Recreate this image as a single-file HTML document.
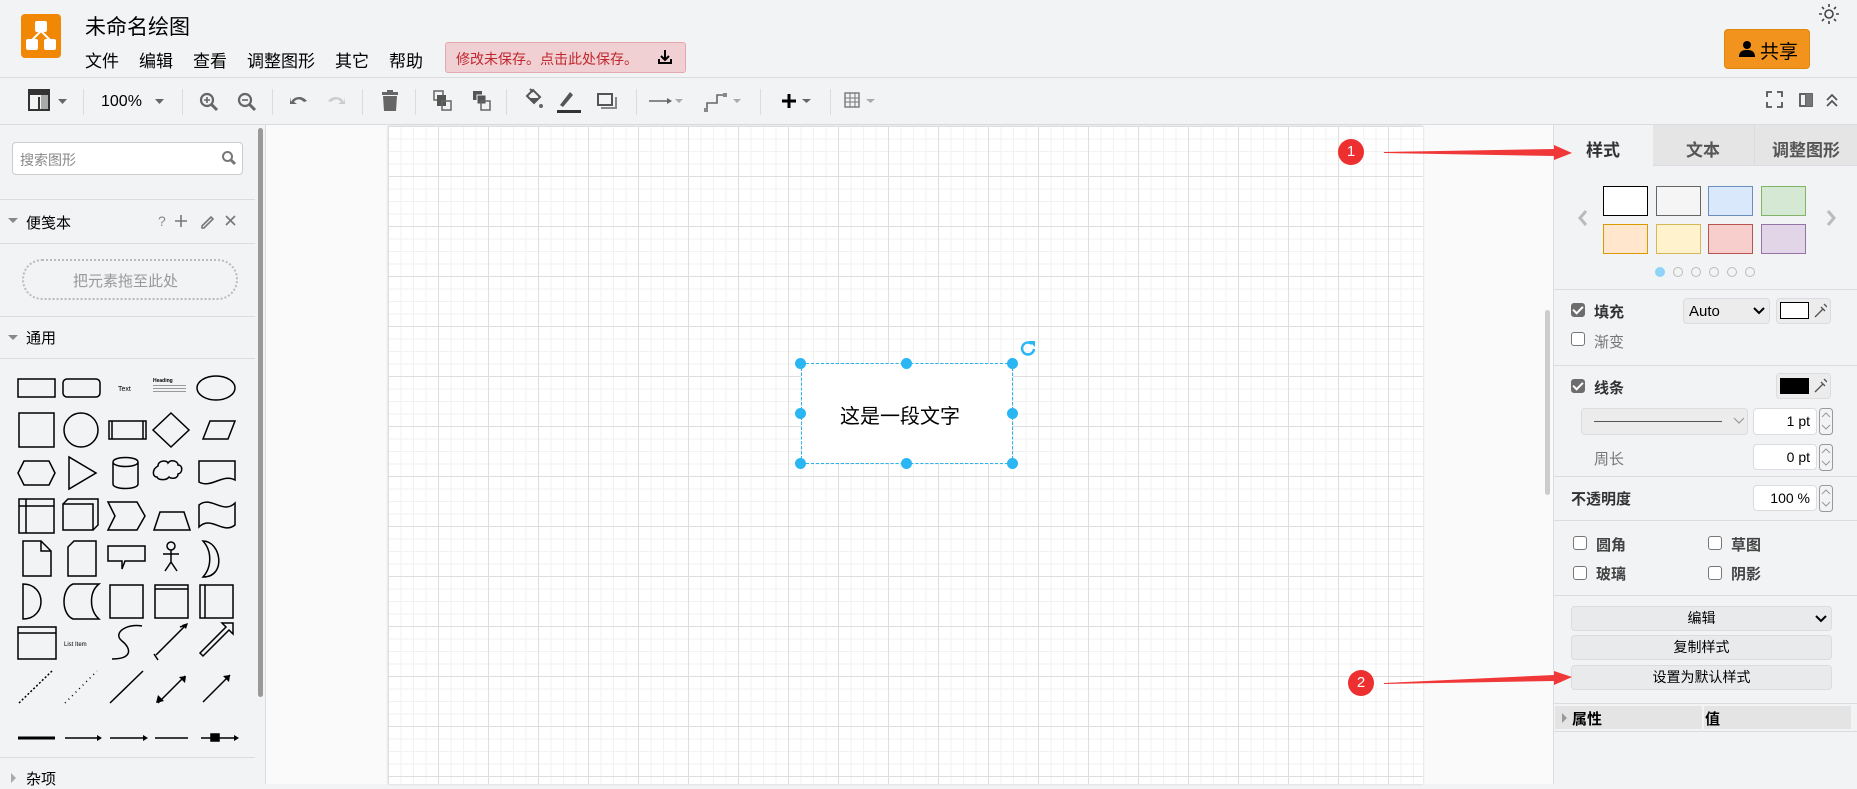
<!DOCTYPE html>
<html><head><meta charset="utf-8"><style>
*{box-sizing:border-box;margin:0;padding:0}
body{width:1857px;height:784px;overflow:hidden;background:#f1f3f4;font-family:"Liberation Sans","Noto Sans CJK SC",sans-serif;position:relative;color:#000}
.a{position:absolute}
.sep{position:absolute;height:1px;background:#dadce0}
.vs{position:absolute;width:1px;background:#dadce0;top:89px;height:26px}
.t{position:absolute;white-space:nowrap}
.cb{position:absolute;width:14px;height:14px;border:1.5px solid #777;border-radius:3px;background:#fff}
.cbk{background:#6d6d6d;border-color:#6d6d6d}
.cbk:after{content:"";position:absolute;left:3px;top:0px;width:4px;height:8px;border:solid #fff;border-width:0 2px 2px 0;transform:rotate(45deg)}
.btn{position:absolute;border:1px solid #dadce0;border-radius:4px;background:#e9eaeb;font-size:14px;text-align:center;line-height:23px}
.inp{position:absolute;background:#fff;border:1px solid #dadce0;border-radius:4px;font-size:14px;text-align:right;padding-right:6px;line-height:24px}
.sw{position:absolute;width:45px;height:30px;border:1px solid}
.dot{position:absolute;width:10px;height:10px;border-radius:50%;border:1px solid #bbb;top:267px}
.h{position:absolute;width:11px;height:11px;border-radius:50%;background:#29b6f2}
</style></head><body>

<!-- header -->
<div class="a" style="left:21px;top:14px;width:40px;height:44px;background:#f08705;border-radius:4px"></div>
<svg class="a" style="left:21px;top:14px" width="40" height="44" viewBox="0 0 40 44"><g fill="#fff" stroke="#fff" stroke-width="2"><rect x="15" y="8" width="10" height="9" rx="1"/><rect x="6" y="26" width="10" height="9" rx="1"/><rect x="24" y="26" width="10" height="9" rx="1"/><path d="M20 17L11 26M20 17L29 26" fill="none"/></g></svg>
<div class="t" style="left:85px;top:11px;font-size:21px">未命名绘图</div>
<div class="t" style="left:85px;top:47px;font-size:17px">文件</div>
<div class="t" style="left:139px;top:47px;font-size:17px">编辑</div>
<div class="t" style="left:193px;top:47px;font-size:17px">查看</div>
<div class="t" style="left:247px;top:47px;font-size:17px">调整图形</div>
<div class="t" style="left:335px;top:47px;font-size:17px">其它</div>
<div class="t" style="left:389px;top:47px;font-size:17px">帮助</div>
<div class="a" style="left:445px;top:42px;width:241px;height:31px;background:#f1d0d3;border:1px solid #e4a7ad;border-radius:3px"></div>
<div class="t" style="left:456px;top:49px;font-size:14px;color:#c0262d">修改未保存。点击此处保存。</div>
<svg class="a" style="left:656px;top:48px" width="18" height="18" viewBox="0 0 18 18"><path d="M9 2v10M5 8l4 4 4-4M3 11v4h12v-4" stroke="#000" stroke-width="2" fill="none"/></svg>
<svg class="a" style="left:1818px;top:3px" width="22" height="22" viewBox="0 0 22 22"><circle cx="11" cy="11" r="4" fill="none" stroke="#444" stroke-width="1.6"/><g stroke="#444" stroke-width="1.6"><path d="M11 1v3M11 18v3M1 11h3M18 11h3M4 4l2 2M16 16l2 2M4 18l2-2M16 6l2-2"/></g></svg>
<div class="a" style="left:1724px;top:29px;width:86px;height:40px;background:#f2931e;border:1px solid #e0850f;border-radius:4px"></div>
<svg class="a" style="left:1738px;top:40px" width="18" height="18" viewBox="0 0 18 18"><circle cx="9" cy="5" r="4"/><path d="M1 17c0-6 4-7 8-7s8 1 8 7z"/></svg>
<div class="t" style="left:1760px;top:37px;font-size:19px">共享</div>
<div class="sep" style="left:0;top:77px;width:1857px"></div>

<!-- toolbar -->
<svg class="a" style="left:0;top:78px" width="900" height="46" viewBox="0 78 900 46">
<g fill="#666" stroke="none">
<rect x="29" y="90" width="20" height="20" fill="none" stroke="#333" stroke-width="2"/><rect x="29" y="90" width="20" height="5" fill="#333"/><rect x="41" y="95" width="7" height="14" fill="#aaa"/><path d="M38 97h2v13h-2z" fill="#333"/>
<path d="M58 99h9l-4.5 5z"/><path d="M155 99h9l-4.5 5z"/>
<circle cx="207" cy="100" r="6" fill="none" stroke="#666" stroke-width="2.2"/><path d="M211 104l6 6" stroke="#666" stroke-width="3"/><path d="M204 100h6M207 97v6" stroke="#666" stroke-width="1.6"/>
<circle cx="245" cy="100" r="6" fill="none" stroke="#666" stroke-width="2.2"/><path d="M249 104l6 6" stroke="#666" stroke-width="3"/><path d="M242 100h6" stroke="#666" stroke-width="1.6"/>
<path d="M291 102c3-6 11-7 16-1l-3 1c-4-4-8-3-10 0l3 2h-7v-7z"/>
<path d="M344 102c-3-6-11-7-16-1l3 1c4-4 8-3 10 0l-3 2h7v-7z" fill="#ccc"/>
<rect x="382" y="92" width="16" height="3"/><rect x="387" y="90" width="6" height="3"/><path d="M383 96h14l-1 15h-12z"/>
<rect x="434" y="91" width="9" height="9" fill="none" stroke="#666" stroke-width="1.5"/><rect x="437" y="95" width="9" height="11" fill="#555"/><rect x="442" y="101" width="9" height="9" fill="none" stroke="#666" stroke-width="1.5"/>
<rect x="473" y="91" width="9" height="9" fill="#555"/><rect x="477" y="95" width="9" height="9" fill="#555" stroke="#f1f3f4" stroke-width="1"/><rect x="481" y="101" width="9" height="9" fill="none" stroke="#666" stroke-width="1.5"/>
<path d="M527 96l6-6 7 7-6 6z" fill="none" stroke="#555" stroke-width="2"/><path d="M529 98h11l-6 6z" fill="#555"/><circle cx="541" cy="106" r="2"/><path d="M530 89l3 3" stroke="#555" stroke-width="2"/>
<path d="M560 105l10-13 3 3-10 12z" fill="#555"/><rect x="557" y="110" width="24" height="3" fill="#333"/>
<rect x="598" y="94" width="14" height="11" fill="none" stroke="#555" stroke-width="2"/><path d="M601 107h14v-10h2v12h-16z" fill="#888"/>
<path d="M649 101h19" stroke="#666" stroke-width="1.6"/><path d="M667 98l5 3-5 3z"/><path d="M675 99h8l-4 4z" fill="#aaa"/>
<path d="M707 110v-7h10v-8h8" stroke="#666" stroke-width="1.6" fill="none"/><rect x="704" y="108" width="4" height="4" fill="#888"/><rect x="723" y="93" width="4" height="4" fill="#888"/><path d="M733 99h8l-4 4z" fill="#aaa"/>
<path d="M782 101h14M789 94v14" stroke="#000" stroke-width="3"/><path d="M802 99h9l-4.5 4z" fill="#666"/>
<rect x="845" y="93" width="14" height="14" fill="none" stroke="#777" stroke-width="1.4"/><path d="M850 93v14M855 93v14M845 98h14M845 102h14" stroke="#777" stroke-width="1"/><path d="M866 99h9l-4.5 4z" fill="#aaa"/>
</g></svg>
<div class="t" style="left:101px;top:93px;font-size:16px">100%</div>
<div class="vs" style="left:83px"></div><div class="vs" style="left:182px"></div><div class="vs" style="left:272px"></div><div class="vs" style="left:362px"></div><div class="vs" style="left:415px"></div><div class="vs" style="left:506px"></div><div class="vs" style="left:636px"></div><div class="vs" style="left:760px"></div><div class="vs" style="left:830px"></div>
<svg class="a" style="left:1766px;top:91px" width="80" height="20" viewBox="0 0 80 20"><g stroke="#555" stroke-width="1.8" fill="none"><path d="M1 6V1h5M11 1h5v5M16 11v5h-5M6 16H1v-5"/><rect x="34" y="3" width="12" height="12"/><path d="M40 3v12" /><path d="M61 9l5-5 5 5M61 15l5-5 5 5"/></g><rect x="40" y="3" width="6" height="12" fill="#777"/></svg>
<div class="sep" style="left:0;top:124px;width:1857px"></div>

<!-- left sidebar -->
<div class="a" style="left:12px;top:142px;width:231px;height:33px;background:#fff;border:1px solid #ccc;border-radius:4px"></div>
<div class="t" style="left:20px;top:150px;font-size:14px;color:#888">搜索图形</div>
<svg class="a" style="left:221px;top:150px" width="16" height="16" viewBox="0 0 16 16"><circle cx="6.5" cy="6.5" r="4.5" fill="none" stroke="#777" stroke-width="2"/><path d="M10 10l4 4" stroke="#777" stroke-width="3"/></svg>
<div class="sep" style="left:0;top:199px;width:255px"></div>
<svg class="a" style="left:8px;top:217px" width="10" height="8"><path d="M0 1h10L5 6z" fill="#888"/></svg>
<div class="t" style="left:26px;top:212px;font-size:15px">便笺本</div>
<div class="t" style="left:158px;top:213px;font-size:14px;color:#888">?</div>
<svg class="a" style="left:174px;top:213px" width="70" height="16"><g stroke="#777" stroke-width="1.6" fill="none"><path d="M7 2v12M1 8h12"/><path d="M28 13l9-9 2 2-9 9h-2z"/><path d="M52 3l9 9M61 3l-9 9"/></g></svg>
<div class="sep" style="left:0;top:243px;width:255px"></div>
<div class="a" style="left:22px;top:259px;width:216px;height:41px;border:2px dotted #bbb;border-radius:20px"></div>
<div class="t" style="left:73px;top:270px;font-size:15px;color:#999">把元素拖至此处</div>
<div class="sep" style="left:0;top:316px;width:255px"></div>
<svg class="a" style="left:8px;top:334px" width="10" height="8"><path d="M0 1h10L5 6z" fill="#888"/></svg>
<div class="t" style="left:26px;top:327px;font-size:15px">通用</div>
<div class="sep" style="left:0;top:358px;width:255px"></div>
<svg class="a" style="left:0;top:360px" width="255" height="395" viewBox="0 360 255 395"><g fill="none" stroke="#000" stroke-width="1.5">
<rect x="18" y="379" width="37" height="18"/><rect x="63" y="379" width="37" height="18" rx="4"/><ellipse cx="216" cy="388" rx="19" ry="12"/>
<rect x="19" y="413" width="35" height="34"/><circle cx="81" cy="430" r="17"/><rect x="109" y="421" width="37" height="18"/><path d="M112 421v18M143 421v18"/><path d="M171 413l18 17-18 17-18-17z"/><path d="M203 439l7-18h25l-7 18z"/>
<path d="M18 473l6-12h25l6 12-6 12H24z"/><path d="M69 457v32l27-16z"/><path d="M113 462c0-6 25-6 25 0v22c0 6-25 6-25 0zM113 462c0 6 25 6 25 0"/><path d="M158 466c0-6 9-6 10-3 3-4 10-2 10 2 5 0 5 8 0 9 0 5-7 5-9 3-3 4-11 3-12 0-5 0-5-8 1-11z"/><path d="M199 461h36v19c-12-7-24 9-36 2z"/>
<rect x="19" y="499" width="35" height="34"/><path d="M26 499v34M19 506h35"/><path d="M63 504h30v26H63zM63 504l5-5h30v26l-5 5"/><path d="M108 502h29l8 14-8 14h-29l7-14z"/><path d="M154 530l6-18h24l6 18z"/><path d="M199 505c12-10 24 10 36-2v22c-12 10-24-10-36 2z"/>
<path d="M23 541h18l10 10v25H23z"/><path d="M41 541v10h10"/><path d="M68 547l6-6h22v35H68z"/><path d="M108 546h37v15h-20l-3 8v-8h-14z"/><circle cx="171" cy="546" r="4"/><path d="M171 550v12M163 554h16M171 562l-6 9M171 562l6 9"/><path d="M203 541c18 0 24 36 0 36 9-10 9-26 0-36z"/>
<path d="M23 584c24 0 24 35 0 35z"/><path d="M73 584h26c-10 8-10 26 0 35H73c-12-5-12-30 0-35z"/><rect x="110" y="585" width="33" height="33"/><rect x="155" y="585" width="33" height="33"/><path d="M155 589h33"/><rect x="200" y="585" width="33" height="33"/><path d="M205 585v33"/>
<rect x="18" y="627" width="38" height="32"/><path d="M18 633h38"/><path d="M112 659c20 0 20-10 10-18s5-18 20-15"/><path d="M156 655l30-30M158 660l-4-6M186 625l-6 2"/><path d="M200 653l26-26-4-4h11v11l-4-4-26 26z"/>
<path d="M19 703l33-32" stroke-dasharray="2 2"/><path d="M65 703l32-32" stroke-dasharray="1 4"/><path d="M110 703l33-32"/><path d="M158 703l27-27"/><path d="M203 702l27-27"/>
<path d="M18 738h37" stroke-width="3"/><path d="M65 738h32M110 738h33M155 738h33M201 738h33"/><rect x="211" y="734" width="8" height="7" fill="#000"/>
</g><g fill="#000"><path d="M182 625l6-2-2 6zM156 703l2-8 6 6zM186 676l-1 7-6-6zM230 675l-1 7-6-6zM97 735l5 3-5 3zM143 735l5 3-5 3zM234 735l5 3-5 3z"/></g>
<text x="118" y="391" font-size="7" font-family="Liberation Sans">Text</text><text x="153" y="382" font-size="5" font-weight="bold" font-family="Liberation Sans">Heading</text><text x="64" y="646" font-size="6" font-family="Liberation Sans">List Item</text>
<g fill="#999"><rect x="153" y="385" width="33" height="1"/><rect x="153" y="388" width="33" height="1"/><rect x="153" y="391" width="33" height="1"/></g></svg>
<div class="sep" style="left:0;top:757px;width:255px"></div>
<svg class="a" style="left:10px;top:773px" width="8" height="10"><path d="M1 0v10l5-5z" fill="#aaa"/></svg>
<div class="t" style="left:26px;top:768px;font-size:15px">杂项</div>
<div class="a" style="left:258px;top:128px;width:5px;height:569px;background:#999;border-radius:3px"></div>

<!-- canvas -->
<div class="a" style="left:265px;top:125px;width:1288px;height:659px;background:#fafafa;border-left:1px solid #dadce0"></div>
<div class="a" style="left:388px;top:126px;width:1035px;height:658px;background-color:#fff;
background-image:linear-gradient(#dedede 1px,transparent 1px),linear-gradient(90deg,#dedede 1px,transparent 1px),linear-gradient(#f2f2f2 1px,transparent 1px),linear-gradient(90deg,#f2f2f2 1px,transparent 1px);
background-size:50px 50px,50px 50px,12.5px 12.5px,12.5px 12.5px;box-shadow:0 0 2px #ccc"></div>
<div class="a" style="left:1545px;top:310px;width:5px;height:185px;background:#ccc;border-radius:3px"></div>
<div class="a" style="left:801px;top:363px;width:212px;height:101px;background:#fff;border:1px dashed #000"></div>
<div class="a" style="left:801px;top:363px;width:212px;height:101px;border:1px dashed #29b6f2"></div>
<div class="t" style="left:840px;top:400px;font-size:20px">这是一段文字</div>
<div class="h" style="left:795px;top:358px"></div><div class="h" style="left:901px;top:358px"></div><div class="h" style="left:1007px;top:358px"></div>
<div class="h" style="left:795px;top:408px"></div><div class="h" style="left:1007px;top:408px"></div>
<div class="h" style="left:795px;top:458px"></div><div class="h" style="left:901px;top:458px"></div><div class="h" style="left:1007px;top:458px"></div>
<svg class="a" style="left:1020px;top:340px" width="16" height="16" viewBox="0 0 16 16"><path d="M12 4A6 6 0 1 0 14 9" fill="none" stroke="#29b6f2" stroke-width="2.5"/><path d="M9 1h6v6z" fill="#29b6f2"/></svg>

<!-- right panel -->
<div class="a" style="left:1553px;top:125px;width:304px;height:659px;background:#f1f3f4;border-left:1px solid #dadce0"></div>
<div class="a" style="left:1653px;top:125px;width:204px;height:41px;background:#e5e5e5;border-bottom:1px solid #dadce0"></div>
<div class="a" style="left:1754px;top:125px;width:1px;height:41px;background:#dadce0"></div>
<div class="t" style="left:1586px;top:136px;font-size:17px;font-weight:bold;color:#333">样式</div>
<div class="t" style="left:1686px;top:136px;font-size:17px;font-weight:bold;color:#555">文本</div>
<div class="t" style="left:1772px;top:136px;font-size:17px;font-weight:bold;color:#555">调整图形</div>
<div class="sw" style="left:1603px;top:186px;background:#fff;border-color:#000"></div>
<div class="sw" style="left:1656px;top:186px;background:#f5f5f5;border-color:#666"></div>
<div class="sw" style="left:1708px;top:186px;background:#dae8fc;border-color:#6c8ebf"></div>
<div class="sw" style="left:1761px;top:186px;background:#d5e8d4;border-color:#82b366"></div>
<div class="sw" style="left:1603px;top:224px;background:#ffe6cc;border-color:#d79b00"></div>
<div class="sw" style="left:1656px;top:224px;background:#fff2cc;border-color:#d6b656"></div>
<div class="sw" style="left:1708px;top:224px;background:#f8cecc;border-color:#b85450"></div>
<div class="sw" style="left:1761px;top:224px;background:#e1d5e7;border-color:#9673a6"></div>
<svg class="a" style="left:1577px;top:209px" width="260" height="18"><path d="M9 2L3 9l6 7M251 2l6 7-6 7" stroke="#bbb" stroke-width="3" fill="none"/></svg>
<div class="dot" style="left:1655px;background:#8fd3f7;border-color:#8fd3f7"></div><div class="dot" style="left:1673px"></div><div class="dot" style="left:1691px"></div><div class="dot" style="left:1709px"></div><div class="dot" style="left:1727px"></div><div class="dot" style="left:1745px"></div>
<div class="sep" style="left:1554px;top:289px;width:303px"></div>
<div class="cb cbk" style="left:1571px;top:303px"></div>
<div class="t" style="left:1594px;top:301px;font-size:15px;font-weight:bold;color:#333">填充</div>
<div class="btn" style="left:1683px;top:298px;width:87px;height:26px;text-align:left;padding-left:5px;font-size:15px;line-height:25px;background:#ececec">Auto</div>
<svg class="a" style="left:1753px;top:306px" width="12" height="10"><path d="M1 2l5 5 5-5" stroke="#000" stroke-width="2" fill="none"/></svg>
<div class="btn" style="left:1776px;top:298px;width:55px;height:26px;background:#ececec"></div>
<div class="a" style="left:1780px;top:302px;width:29px;height:17px;background:#fff;border:1px solid #000"></div>
<svg class="a" style="left:1813px;top:303px" width="14" height="16"><path d="M2 14l8-8M8 4l4 4M11 1l3 3" stroke="#555" stroke-width="1.4" fill="none"/></svg>
<div class="cb" style="left:1571px;top:332px"></div>
<div class="t" style="left:1594px;top:331px;font-size:15px;color:#777">渐变</div>
<div class="sep" style="left:1554px;top:365px;width:303px"></div>
<div class="cb cbk" style="left:1571px;top:379px"></div>
<div class="t" style="left:1594px;top:377px;font-size:15px;font-weight:bold;color:#333">线条</div>
<div class="btn" style="left:1776px;top:373px;width:55px;height:26px;background:#ececec"></div>
<div class="a" style="left:1780px;top:378px;width:29px;height:16px;background:#000"></div>
<svg class="a" style="left:1813px;top:378px" width="14" height="16"><path d="M2 14l8-8M8 4l4 4M11 1l3 3" stroke="#555" stroke-width="1.4" fill="none"/></svg>
<div class="btn" style="left:1581px;top:408px;width:167px;height:27px;background:#ececec"></div>
<div class="a" style="left:1594px;top:421px;width:128px;height:1px;background:#555"></div>
<svg class="a" style="left:1733px;top:417px" width="12" height="8"><path d="M1 1l5 5 5-5" stroke="#999" stroke-width="1.2" fill="none"/></svg>
<div class="inp" style="left:1753px;top:408px;width:64px;height:27px">1 pt</div>
<div class="inp" style="left:1753px;top:444px;width:64px;height:26px">0 pt</div>
<div class="inp" style="left:1753px;top:485px;width:64px;height:26px">100 %</div>
<svg class="a" style="left:1819px;top:408px" width="14" height="104" viewBox="0 0 14 104"><g fill="none" stroke="#999" stroke-width="1"><rect x="0.5" y="0.5" width="13" height="26" rx="3"/><rect x="0.5" y="36.5" width="13" height="26" rx="3"/><rect x="0.5" y="77.5" width="13" height="26" rx="3"/><path d="M3 9l4-4 4 4M3 17l4 4 4-4M3 45l4-4 4 4M3 53l4 4 4-4M3 86l4-4 4 4M3 94l4 4 4-4"/></g></svg>
<div class="t" style="left:1594px;top:448px;font-size:15px;color:#777">周长</div>
<div class="sep" style="left:1554px;top:476px;width:303px"></div>
<div class="t" style="left:1571px;top:488px;font-size:15px;font-weight:bold;color:#333">不透明度</div>
<div class="sep" style="left:1554px;top:520px;width:303px"></div>
<div class="cb" style="left:1573px;top:536px"></div><div class="t" style="left:1596px;top:534px;font-size:15px;font-weight:bold;color:#444">圆角</div>
<div class="cb" style="left:1708px;top:536px"></div><div class="t" style="left:1731px;top:534px;font-size:15px;font-weight:bold;color:#444">草图</div>
<div class="cb" style="left:1573px;top:566px"></div><div class="t" style="left:1596px;top:563px;font-size:15px;font-weight:bold;color:#444">玻璃</div>
<div class="cb" style="left:1708px;top:566px"></div><div class="t" style="left:1731px;top:563px;font-size:15px;font-weight:bold;color:#444">阴影</div>
<div class="sep" style="left:1554px;top:595px;width:303px"></div>
<div class="btn" style="left:1571px;top:606px;width:261px;height:25px">编辑</div>
<svg class="a" style="left:1815px;top:614px" width="12" height="10"><path d="M1 2l5 5 5-5" stroke="#000" stroke-width="2" fill="none"/></svg>
<div class="btn" style="left:1571px;top:635px;width:261px;height:25px">复制样式</div>
<div class="btn" style="left:1571px;top:665px;width:261px;height:25px">设置为默认样式</div>
<div class="sep" style="left:1554px;top:703px;width:303px"></div>
<div class="a" style="left:1555px;top:706px;width:147px;height:23px;background:#e4e4e4"></div>
<div class="a" style="left:1704px;top:706px;width:147px;height:23px;background:#e4e4e4"></div>
<svg class="a" style="left:1561px;top:712px" width="8" height="12"><path d="M1 1v10l5-5z" fill="#999"/></svg>
<div class="t" style="left:1572px;top:708px;font-size:15px;font-weight:bold">属性</div>
<div class="t" style="left:1705px;top:708px;font-size:15px;font-weight:bold">值</div>
<div class="sep" style="left:1554px;top:731px;width:303px"></div>

<!-- annotations (on top) -->
<div class="a" style="left:1338px;top:139px;width:26px;height:26px;border-radius:50%;background:#ee2f2f;color:#fff;font-size:15px;text-align:center;line-height:26px">1</div>
<svg class="a" style="left:1380px;top:140px" width="200" height="26"><path d="M4 12L174 9v-4l18 8-18 7v-4L4 13z" fill="#f03838"/></svg>
<div class="a" style="left:1348px;top:670px;width:26px;height:26px;border-radius:50%;background:#ee2f2f;color:#fff;font-size:15px;text-align:center;line-height:26px">2</div>
<svg class="a" style="left:1380px;top:665px" width="200" height="26"><path d="M4 18L174 10v-4l18 6-18 8v-4L4 19z" fill="#f03838"/></svg>
</body></html>
